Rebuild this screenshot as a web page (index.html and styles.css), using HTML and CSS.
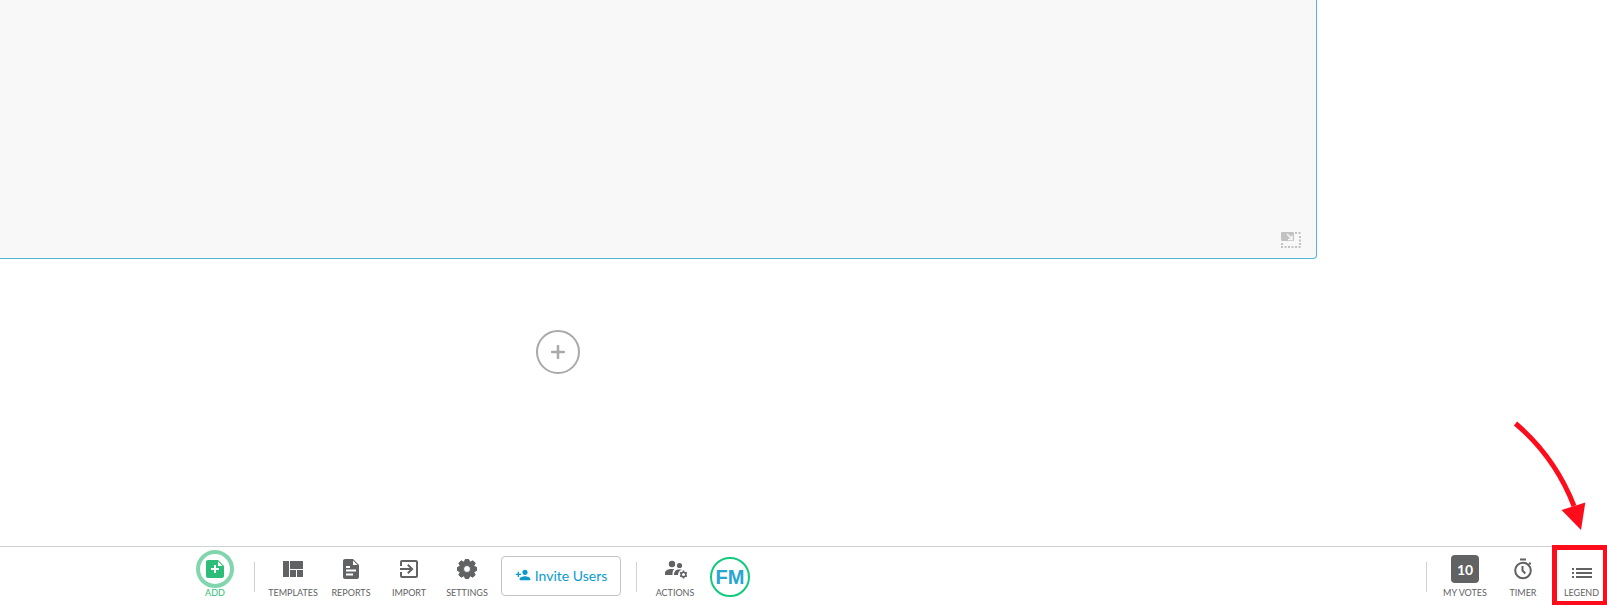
FILE: index.html
```html
<!DOCTYPE html>
<html lang="en">
<head>
    <meta charset="UTF-8">
    <meta name="viewport" content="width=device-width, initial-scale=1.0">
    <title>Board</title>
    <link rel="stylesheet" href="styles.css">
</head>
<body>
    <main class="canvas">
        <section class="board" aria-label="Board">
            <button class="resize" aria-label="Resize">
                <svg width="20" height="18" viewBox="0 0 20 18">
                    <rect x="0" y="1" width="13" height="9" rx="1" fill="#c2c2c2"/>
                    <path d="M6 3l5 5M11 4.500v4h-4" fill="none" stroke="#f8f8f8" stroke-width="1.500"/>
                    <path d="M14 2h6M19 5v11M1 12v4M0 16h20" fill="none" stroke="#c2c2c2" stroke-width="2" stroke-dasharray="2 1.500"/>
                </svg>
            </button>
        </section>
        <button class="add-section" aria-label="Add section">
            <svg width="14" height="14" viewBox="0 0 14 14"><path d="M7 1v12M1 7h12" stroke="#a9a9a9" stroke-width="2.500" stroke-linecap="round"/></svg>
        </button>
    </main>

    <footer class="toolbar">
        <div class="group group-left">
            <button class="item add">
                <span class="icon ring">
                    <svg width="24" height="24" viewBox="0 0 24 24"><path fill="#2dbd78" d="M5 3h10l6 6v10a2 2 0 0 1-2 2H5a2 2 0 0 1-2-2V5a2 2 0 0 1 2-2z"/><path fill="#fff" d="M15 4.500V9h4.500zM11 8h2v3h3v2h-3v3h-2v-3H8v-2h3z"/></svg>
                </span>
                <span class="label">ADD</span>
            </button>
            <span class="divider"></span>
            <button class="item">
                <span class="icon"><svg width="24" height="24" viewBox="0 0 24 24"><path d="M2 4h6v16H2zM9 4h13v8H9zM9 13h6v7H9zM16 13h6v7h-6z"/></svg></span>
                <span class="label">TEMPLATES</span>
            </button>
            <button class="item">
                <span class="icon"><svg width="24" height="24" viewBox="0 0 24 24"><path d="M14 2H6c-1.100 0-2 .9-2 2v16c0 1.100.9 2 2 2h12c1.100 0 2-.9 2-2V8l-6-6z"/><path fill="#fff" d="M14 3.500V8h4.500zM7 9h4v2H7zM7 12.500h10v2H7zM7 16.500h7v2H7z"/></svg></span>
                <span class="label">REPORTS</span>
            </button>
            <button class="item">
                <span class="icon"><svg width="24" height="24" viewBox="0 0 24 24"><path d="M10.090 15.590L11.500 17l5-5-5-5-1.410 1.410L12.670 11H3v2h9.670l-2.580 2.590zM19 3H5a2 2 0 0 0-2 2v4h2V5h14v14H5v-4H3v4a2 2 0 0 0 2 2h14c1.100 0 2-.9 2-2V5c0-1.100-.9-2-2-2z"/></svg></span>
                <span class="label">IMPORT</span>
            </button>
            <button class="item">
                <span class="icon"><svg width="24" height="24" viewBox="0 0 24 24"><path fill-rule="evenodd" stroke="#616264" stroke-linejoin="round" d="M10.300 2.500h3.400l.8 2.100 1 .4 2.500-1.200 2.300 2.300L19 8.500l.4 1 2.100.8v3.400l-2.100.8-.4 1 1.200 2.400-2.300 2.300-2.400-1.200-1 .4-.8 2.100h-3.400l-.8-2.100-1-.4-2.400 1.200-2.300-2.300L5 15.500l-.4-1-2.100-.8v-3.400l2.100-.8.4-1-1.200-2.400 2.300-2.300L8.500 5l1-.4zM12 8.500a3.500 3.500 0 1 0 0 7 3.500 3.500 0 0 0 0-7z"/></svg></span>
                <span class="label">SETTINGS</span>
            </button>
            <button class="invite">
                <svg width="16" height="16" viewBox="0 0 24 24"><path d="M15 12c2.210 0 4-1.790 4-4s-1.790-4-4-4-4 1.790-4 4 1.790 4 4 4zm-9-2V7H4v3H1v2h3v3h2v-3h3v-2H6zm9 4c-2.670 0-8 1.340-8 4v2h16v-2c0-2.660-5.330-4-8-4z"/></svg>
                Invite Users
            </button>
            <span class="divider"></span>
            <button class="item">
                <span class="icon"><svg width="24" height="24" viewBox="0 0 24 24"><circle cx="9" cy="7" r="3.200"/><circle cx="16.500" cy="8.500" r="2.600"/><path d="M2 18v-2c0-2.500 3-4 7-4 .8 0 1.500.1 2.200.2-1.500 1.200-1.700 2.600-1.700 5.800zM11 18c0-3.500 1.500-5.500 5.500-5.500.9 0 1.600.1 2.200.3-2.300.8-3.700 2.600-3.700 5.200z"/><circle cx="20.500" cy="17.500" r="2.300" fill="none" stroke="#616264" stroke-width="1.600"/><path d="M20.500 13.600v1.500M20.500 19.900v1.500M17.100 15.500l1.300.8M22.600 18.700l1.300.8M17.100 19.500l1.300-.8M22.600 16.300l1.300-.8" stroke="#616264" stroke-width="1.600"/></svg></span>
                <span class="label">ACTIONS</span>
            </button>
            <button class="avatar">FM</button>
        </div>

        <div class="group group-right">
            <span class="divider"></span>
            <button class="item">
                <span class="icon votes">10</span>
                <span class="label">MY VOTES</span>
            </button>
            <button class="item">
                <span class="icon"><svg width="24" height="24" viewBox="0 0 24 24"><path d="M15 1.500H9v2h6zM19 7.900l1.300-1.400-1.400-1.400-1.400 1.400"/><circle cx="12" cy="13.500" r="7.800" fill="none" stroke="#616264" stroke-width="2"/><path d="M11.500 9v4.500l2.800 3" fill="none" stroke="#616264" stroke-width="2"/></svg></span>
                <span class="label">TIMER</span>
            </button>
            <button class="item legend">
                <span class="icon"><svg width="24" height="24" viewBox="0 0 24 24"><path d="M2 7h2v2H2zM2 11h2v2H2zM2 15h2v2H2zM6 7h16v2H6zM6 11h16v2H6zM6 15h16v2H6z"/></svg></span>
                <span class="label">LEGEND</span>
                <span class="highlight"></span>
                <svg class="arrow" width="117" height="140" viewBox="0 0 117 140"><path d="M25.500 18.500Q65 52 84 101" fill="none" stroke="#fd0d1b" stroke-width="5"/><path d="M71.500 105L95.300 97.500 91 125z" fill="#fd0d1b"/></svg>
            </button>
        </div>
    </footer>
</body>
</html>
```

FILE: styles.css
```css
* {
    margin: 0;
    padding: 0;
    box-sizing: border-box;
}

body {
    font-family: Lato, "Liberation Sans", sans-serif;
    background-color: #fff;
    color: #616264;
    display: flex;
    flex-direction: column;
    min-height: 100vh;
}

button {
    font-family: inherit;
    color: inherit;
    background: none;
    border: none;
    cursor: pointer;
}

svg {
    display: block;
    fill: #616264;
}

.canvas {
    flex: 1;
}

.board {
    display: flex;
    justify-content: flex-end;
    align-items: flex-end;
    height: 259px;
    margin-right: 290px;
    padding: 0 15px 9px;
    background-color: #f8f8f8;
    border: solid #50b8d4;
    border-width: 0 1px 1px 0;
    border-bottom-right-radius: 4px;
}

.add-section {
    display: flex;
    justify-content: center;
    align-items: center;
    width: 44px;
    height: 44px;
    margin: 71px 0 0 536px;
    border: 2px solid #a9a9a9;
    border-radius: 50%;
}

.toolbar {
    display: flex;
    justify-content: space-between;
    height: 59px;
    background-color: #fff;
    border-top: 1px solid #d0d1d8;
}

.group {
    display: flex;
    align-items: flex-start;
}

.group-left {
    padding-left: 186px;
}

.divider {
    width: 1px;
    height: 30px;
    margin: 15px 9px 0 10px;
    background-color: #d0d1d8;
}

.item {
    display: flex;
    flex-direction: column;
    align-items: center;
    width: 58px;
    padding-top: 3px;
}

.icon {
    display: flex;
    justify-content: center;
    align-items: center;
    height: 38px;
}

.label {
    font-size: 9px;
    line-height: 10px;
}

.add {
    color: #2dbd78;
}

.ring {
    width: 38px;
    border: 4px solid #82d6ae;
    border-radius: 50%;
}

.invite {
    display: flex;
    justify-content: center;
    align-items: center;
    gap: 4px;
    width: 120px;
    height: 40px;
    margin: 9px 5px 0;
    padding-bottom: 2px;
    border: 1px solid #c4c4c6;
    border-radius: 4px;
    color: #0a9bcd;
    font-size: 14px;
}

.invite svg {
    fill: #0a9bcd;
}

.avatar {
    width: 40px;
    height: 40px;
    margin: 10px 0 0 6px;
    border: 2px solid #13c97e;
    border-radius: 50%;
    color: #27a6d3;
    font-family: "Liberation Sans", sans-serif;
    font-size: 20px;
    font-weight: bold;
}

.votes {
    width: 28px;
    height: 28px;
    margin: 5px 0;
    border-radius: 4px;
    background-color: #616264;
    color: #fff;
    font-size: 14px;
    font-weight: bold;
}

.legend {
    position: relative;
    width: 55px;
    padding-left: 4px;
}

.legend .icon {
    padding-top: 8px;
}

.highlight {
    position: absolute;
    inset: -2px 0 -1px 0;
    height: 60px;
    border: solid #fd0d1b;
    border-width: 5px 4px 4px 5px;
}

.arrow {
    position: absolute;
    right: 0;
    top: -142px;
}
```
